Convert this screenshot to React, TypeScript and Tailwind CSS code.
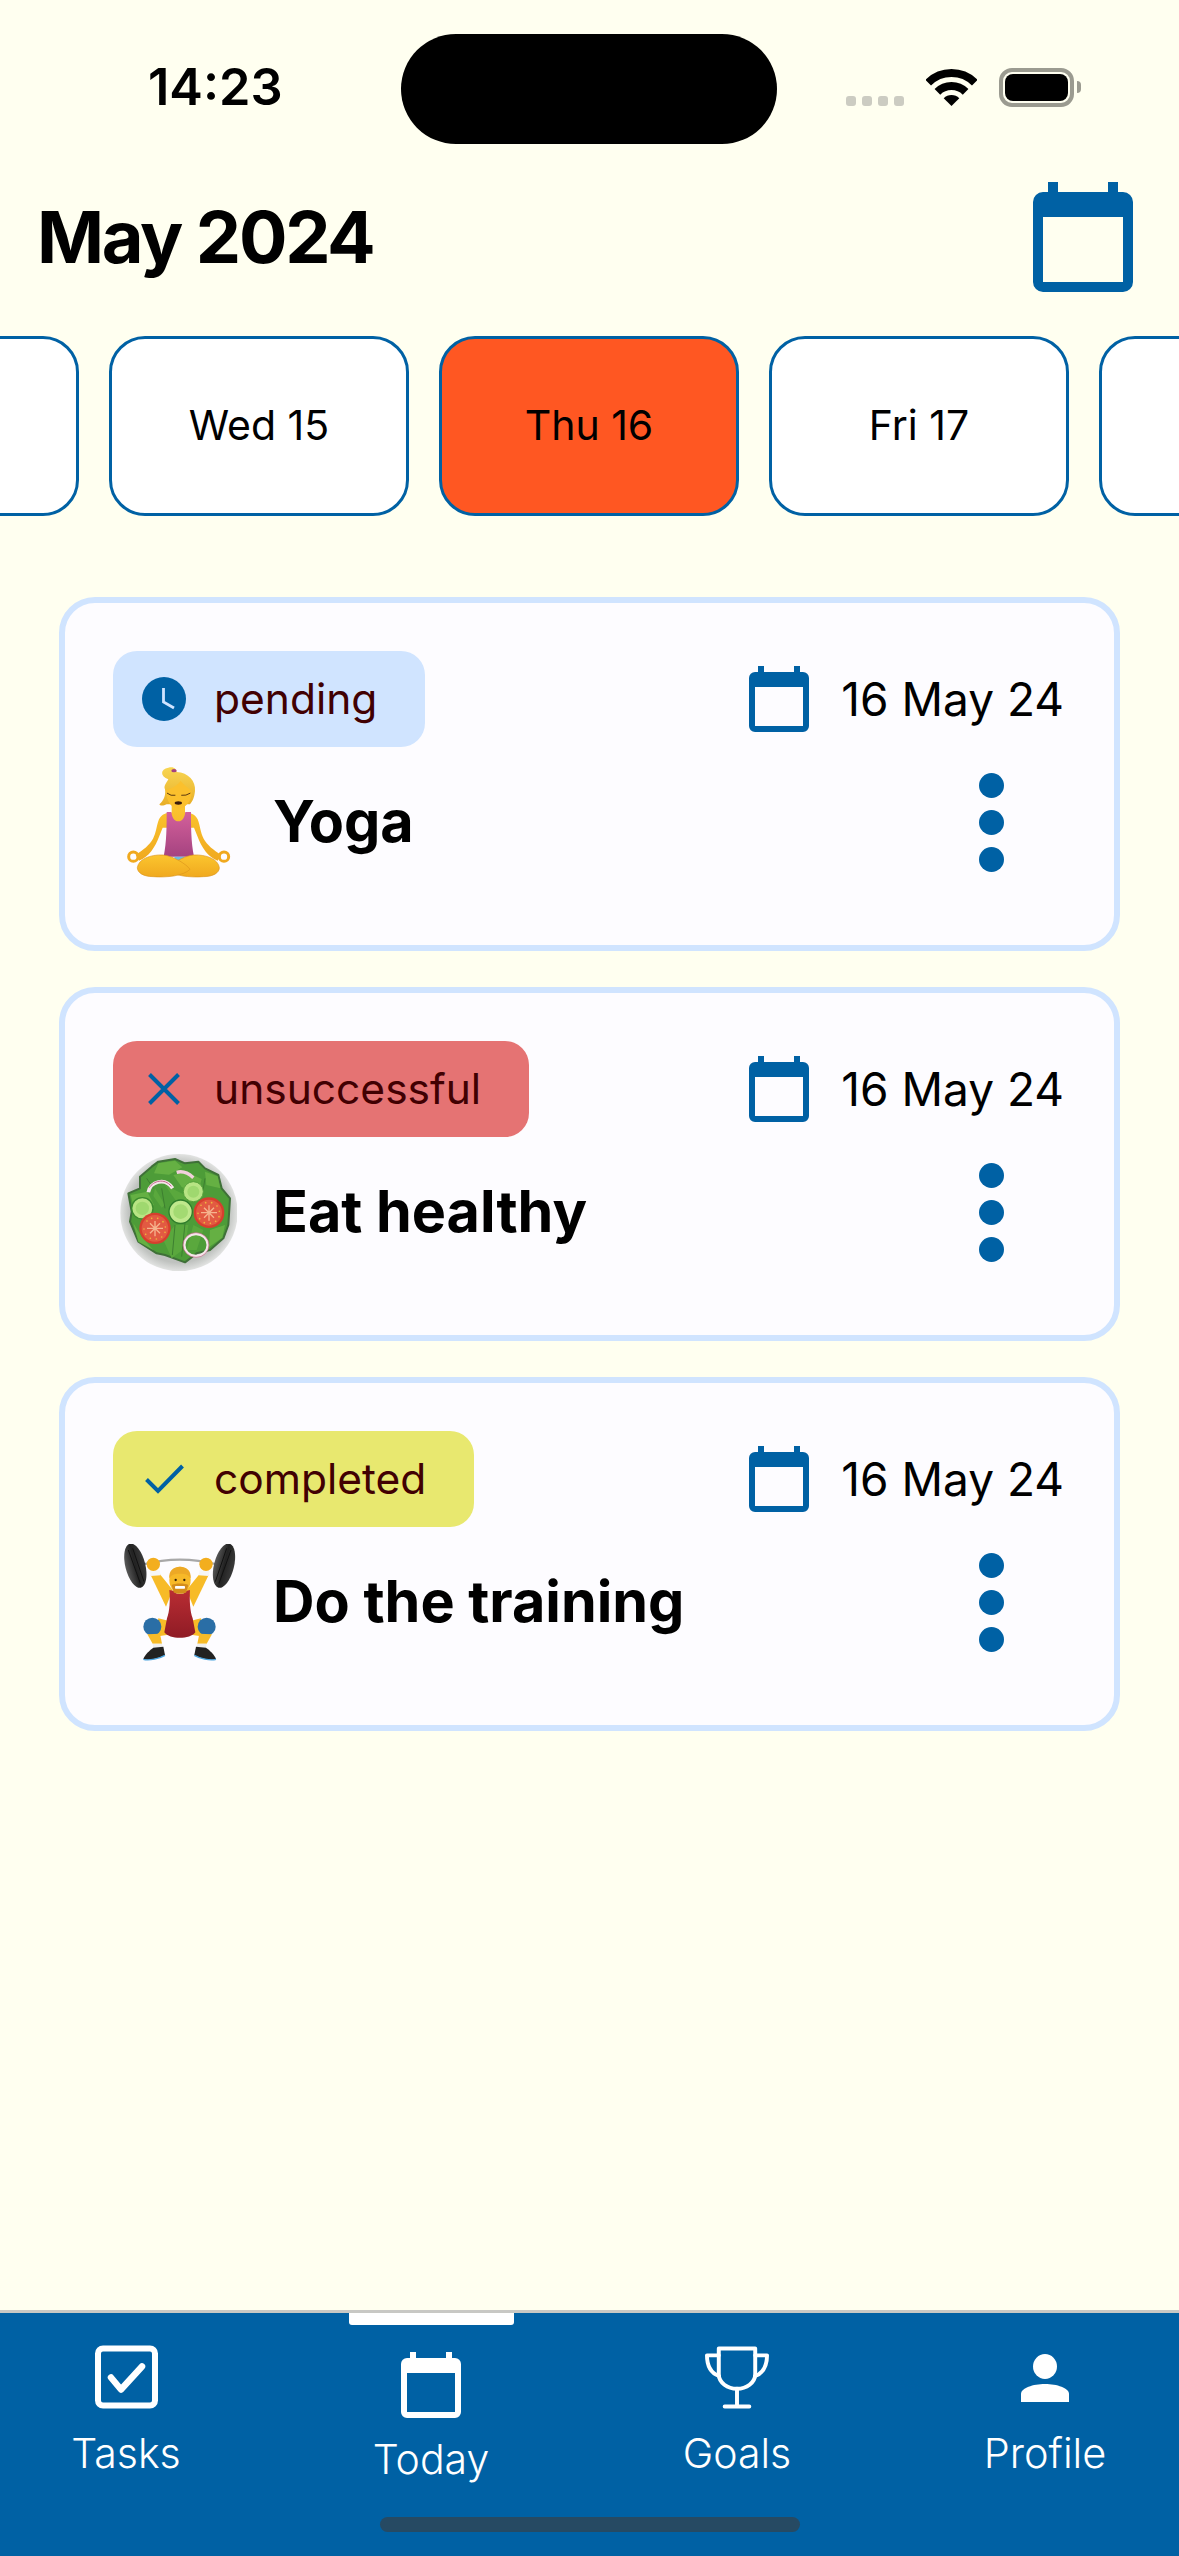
import React from 'react';

const DAYS = ['Tue 14', 'Wed 15', 'Thu 16', 'Fri 17', 'Sat 18'];
const TOMATO_SEEDS = [
  [-24, -22], [-10, -30], [8, -30], [24, -20], [31, -4], [30, 12], [20, 26], [4, 32], [-14, 30], [-28, 18], [-33, 2],
];

function CalendarIcon({ className }: { className: string }) {
  return (
    <svg viewBox="0 0 20 22" className={className} fill="currentColor">
      <path
        fillRule="evenodd"
        d="M2 2h1V0h2v2h10V0h2v2h1a2 2 0 0 1 2 2v16a2 2 0 0 1-2 2H2a2 2 0 0 1-2-2V4a2 2 0 0 1 2-2zm0 5v13h16V7H2z"
      />
    </svg>
  );
}

function ClockIcon() {
  return (
    <svg viewBox="0 0 44 44" className="w-[44px] h-[44px]">
      <circle cx="22" cy="22" r="22" fill="#0061a4" />
      <path d="M21.5 11v14l10.500 6" fill="none" stroke="#d0e4ff" strokeWidth="2.800" />
    </svg>
  );
}

function CrossIcon() {
  return (
    <svg viewBox="0 0 32 32" className="w-[32px] h-[32px]">
      <path d="M1.500 1.500l29 29M30.500 1.500l-29 29" fill="none" stroke="#0061a4" strokeWidth="4" />
    </svg>
  );
}

function CheckIcon() {
  return (
    <svg viewBox="0 0 39 30" className="w-[39px] h-[30px]">
      <path d="M1.500 15.500l11.500 11.500 24.500-25" fill="none" stroke="#0061a4" strokeWidth="4" />
    </svg>
  );
}

function YogaEmoji() {
  return (
    <svg viewBox="30 24 351 351" className="w-[117px] h-[117px]">
      <defs>
        <linearGradient id="yogaTop" x1="0" y1="0" x2="0" y2="1">
          <stop offset="0" stopColor="#d4609b" />
          <stop offset="1" stopColor="#a54380" />
        </linearGradient>
        <linearGradient id="yogaHair" x1="0" y1="0" x2="0" y2="1">
          <stop offset="0" stopColor="#f8d654" />
          <stop offset="1" stopColor="#e8ae27" />
        </linearGradient>
        <linearGradient id="yogaSkin" x1="0" y1="0" x2="0" y2="1">
          <stop offset="0" stopColor="#fbc52e" />
          <stop offset="1" stopColor="#f0a91f" />
        </linearGradient>
      </defs>
      <circle cx="70" cy="302" r="14" fill="none" stroke="#f0a91f" strokeWidth="9" />
      <circle cx="342" cy="302" r="14" fill="none" stroke="#f0a91f" strokeWidth="9" />
      <path
        d="M185 150H225V170C240 170 255 173 263 190C271 210 271 230 281 248C291 266 311 283 333 296L323 314C293 302 275 275 262 240L252 215H158L148 240C135 275 117 302 87 314L77 296C99 283 119 266 129 248C139 230 139 210 147 190C155 173 170 170 185 170Z"
        fill="url(#yogaSkin)"
      />
      <path d="M170 168h14c2 18 10 28 21 28s19-10 21-28h17c0 42 0 90 9 134h-91c9-44 9-92 9-134z" fill="url(#yogaTop)" />
      <path d="M192 302h32l-6 14h-20zM196 340h22l-10 10z" fill="#6bbce4" />
      <path d="M328 335c-3-25-38-40-78-38-30 3-70 28-80 43 20 20 70 25 110 22 30 0 48-12 48-27z" fill="url(#yogaSkin)" stroke="#dd961b" strokeWidth="2" />
      <path d="M82 335c3-25 38-40 78-38 30 3 70 28 80 43-20 20-70 25-110 22-30 0-48-12-48-27z" fill="url(#yogaSkin)" stroke="#dd961b" strokeWidth="2" />
      <path
        d="M175 70c-25-10-25-30 0-35 15-5 25 3 25 13 35 2 58 27 55 57-2 20-7 30-15 40h-70c-10 5-20 5-22 0 12-10 20-25 17-45-5-10 5-20 10-30z"
        fill="url(#yogaHair)"
      />
      <ellipse cx="192" cy="44" rx="8" ry="5" fill="#a54380" />
      <path d="M168 102c17-2 37-17 44-27 13 15 28 25 33 30 2 30-20 53-40 53s-37-23-37-56z" fill="#fbc02d" />
      <path d="M172 112q11 9 23 6M215 118q13 2 25-6" fill="none" stroke="#5c3a10" strokeWidth="3" strokeLinecap="round" />
      <ellipse cx="205" cy="141" rx="11" ry="5" fill="#3a1c0c" />
    </svg>
  );
}

function SaladEmoji() {
  return (
    <svg viewBox="30 27 351 351" className="w-[117px] h-[117px]">
      <defs>
        <radialGradient id="saladPlate" cx="0.5" cy="0.5" r="0.5">
          <stop offset="0.85" stopColor="#bfc2bf" />
          <stop offset="1" stopColor="#e2e3e2" />
        </radialGradient>
      </defs>
      <circle cx="207" cy="203" r="176" fill="url(#saladPlate)" />
      <path
        d="M55 145L90 130L90 95L125 65L145 50L195 42L225 55L265 50L285 70L325 90L335 130L360 160L355 240L340 280L300 315L260 325L225 352L165 330L140 325L85 290L60 230L65 200Z"
        fill="#4d9c38"
        stroke="#3f7038"
        strokeWidth="6"
        strokeLinejoin="round"
      />
      <path d="M145 55l50-8 22 20-40 22-45-4zM190 90l40-8 45 20-12 46-48-22zM285 80l38 14 8 36-42-10zM62 150l50-10 20 40-55 30zM300 255l45-15-8 38-40 28zM70 235l25 40 35 40-45-25z" fill="#65b043" />
      <path d="M135 130l30 50-10 8-25-35zM195 240l40 0-10 70-40 30-25-55zM165 120l60 30 15 40-40-20zM250 240l30 15-20 60-30 0z" fill="#5aa83d" />
      <path d="M195 240l-8 90M225 235l-10 100M155 130l10 60M285 100l-8 50M110 100l20 30" fill="none" stroke="#3d7f30" strokeWidth="3" />
      <path d="M115 142c5-32 50-47 73-12" fill="none" stroke="#f5e6ea" strokeWidth="11" />
      <path d="M118 128c12-20 45-30 66-4" fill="none" stroke="#c8648c" strokeWidth="3" />
      <path d="M200 82q25-7 50 16" fill="none" stroke="#f3d0dc" strokeWidth="10" />
      <circle cx="97" cy="190" r="32" fill="#b8e484" stroke="#3a8a2e" strokeWidth="4" />
      <circle cx="97" cy="190" r="20" fill="#9fd86f" />
      <circle cx="212" cy="200" r="35" fill="#bfe88c" stroke="#2f7d2b" strokeWidth="4" />
      <circle cx="212" cy="200" r="22" fill="#a3da72" />
      <circle cx="250" cy="140" r="30" fill="#b8e484" stroke="#55a03a" strokeWidth="3" />
      <circle cx="250" cy="140" r="18" fill="#9fd86f" />
      {[
        [135, 250, 47],
        [297, 203, 46],
      ].map(([cx, cy, r]) => (
        <g key={cx}>
          <circle cx={cx} cy={cy} r={r} fill="#d63f2e" />
          <circle cx={cx} cy={cy} r={r - 7} fill="#e25a42" />
          <path d={`M${cx} ${cy - 22}V${cy + 24}M${cx - 24} ${cy}H${cx + 24}M${cx - 15} ${cy - 15}L${cx + 15} ${cy + 15}M${cx + 15} ${cy - 15}L${cx - 15} ${cy + 15}`} stroke="#f6b48e" strokeWidth="4" />
          {TOMATO_SEEDS.map(([dx, dy]) => (
            <circle key={`${dx}${dy}`} cx={cx + dx} cy={cy + dy} r="2.500" fill="#eeb93e" />
          ))}
        </g>
      ))}
      <ellipse cx="258" cy="300" rx="35" ry="33" fill="none" stroke="#f5e6ea" strokeWidth="7" />
      <ellipse cx="258" cy="300" rx="39" ry="37" fill="none" stroke="#c8648c" strokeWidth="2" />
    </svg>
  );
}

function LifterEmoji() {
  return (
    <svg viewBox="30 27 351 351" className="w-[117px] h-[117px]">
      <defs>
        <linearGradient id="lifterPlate" x1="0" y1="0" x2="1" y2="0">
          <stop offset="0" stopColor="#5a5a5a" />
          <stop offset="0.5" stopColor="#222222" />
          <stop offset="1" stopColor="#3a3a3a" />
        </linearGradient>
        <linearGradient id="lifterRed" x1="0" y1="0" x2="0" y2="1">
          <stop offset="0" stopColor="#b92d33" />
          <stop offset="1" stopColor="#8f1b25" />
        </linearGradient>
      </defs>
      <path d="M100 88Q210 60 320 88" fill="none" stroke="#a8a8a8" strokeWidth="7" />
      <path d="M94 82l12 2-2 14-12-2zM326 82l-12 2 2 14 12-2z" fill="#1d5a9c" />
      <ellipse cx="76" cy="92" rx="30" ry="68" transform="rotate(-14 76 92)" fill="url(#lifterPlate)" />
      <path d="M55 45l36 100M68 40l34 100" stroke="#111111" strokeWidth="3" fill="none" />
      <ellipse cx="342" cy="92" rx="30" ry="68" transform="rotate(14 342 92)" fill="url(#lifterPlate)" />
      <path d="M363 45l-36 100M350 40l-34 100" stroke="#111111" strokeWidth="3" fill="none" />
      <path d="M122 120L150 118L188 165L168 215Z" fill="#f7bb28" />
      <path d="M296 120L268 118L230 165L250 215Z" fill="#f7bb28" />
      <path d="M119 108l30-2 3 15-30 2zM299 108l-30-2-3 15 30 2z" fill="#f6f6f6" />
      <circle cx="130" cy="88" r="20" fill="#f3ae1e" />
      <circle cx="288" cy="88" r="20" fill="#f3ae1e" />
      <path d="M145 250L178 258L170 300L135 305Z" fill="#f7bb28" />
      <path d="M273 250L240 258L248 300L283 305Z" fill="#f7bb28" />
      <path d="M178 165l14 3c3 12 33 12 36 0l12-3c-2 30 0 65 8 85l8 42c-15 22-78 22-93 0l8-42c8-20 10-55 7-85z" fill="url(#lifterRed)" />
      <circle cx="127" cy="275" r="27" fill="#2a6ea6" />
      <circle cx="290" cy="275" r="27" fill="#2a6ea6" />
      <path d="M112 298L150 296L156 326L128 326Z" fill="#f7bb28" />
      <path d="M306 298L268 296L262 326L290 326Z" fill="#f7bb28" />
      <path d="M128 326H156L158 340H130Z" fill="#efefef" />
      <path d="M290 326H262L260 340H288Z" fill="#efefef" />
      <path d="M130 338L160 335L165 360C150 370 115 378 100 372C105 358 120 345 130 338Z" fill="#222222" />
      <path d="M288 338L258 335L253 360C268 370 303 378 318 372C313 358 298 345 288 338Z" fill="#222222" />
      <path d="M100 373C118 378 150 370 165 361M318 373C300 378 268 370 253 361" fill="none" stroke="#4aa3de" strokeWidth="4" />
      <ellipse cx="210" cy="135" rx="32" ry="40" fill="#f7b928" />
      <path d="M178 130c-2-25 14-35 32-35s34 10 32 35c-6-10-14-14-32-14s-26 4-32 14z" fill="#eda926" />
      <path d="M185 150c10-6 40-6 50 0l-6 22c-10 6-28 6-38 0z" fill="#d48d1b" />
      <rect x="195" y="153" width="30" height="8" rx="2" fill="#ffffff" />
      <circle cx="197" cy="135" r="3.500" fill="#33210a" />
      <circle cx="223" cy="135" r="3.500" fill="#33210a" />
    </svg>
  );
}

function TaskCard({ badge, badgeBg, icon, emoji, title }: { badge: string; badgeBg: string; icon: React.ReactNode; emoji: React.ReactNode; title: string }) {
  return (
    <div className="h-[354px] rounded-[36px] border-[6px] border-[#d0e4ff] bg-[#fdfcff] pt-[48px] pl-[48px] pr-[50px]">
      <div className="flex items-center justify-between h-[96px]">
        <div className={`flex items-center h-[96px] rounded-[24px] pl-[21px] pr-[48px] ${badgeBg}`}>
          <div className="flex items-center justify-center w-[60px] mr-[20px]">{icon}</div>
          <span className="text-[42.500px] leading-none text-[#410002]">{badge}</span>
        </div>
        <div className="flex items-center gap-[32px]">
          <CalendarIcon className="w-[60px] h-[66px] text-[#0061a4]" />
          <span className="text-[46px] leading-none text-black">16 May 24</span>
        </div>
      </div>
      <div className="flex items-center mt-[15px] h-[120px] pl-[7px] pr-[60px]">
        {emoji}
        <span className="ml-[36px] text-[57.500px] font-bold leading-none text-black">{title}</span>
        <div className="ml-auto flex flex-col gap-[12px]">
          <div className="w-[25px] h-[25px] rounded-full bg-[#0061a4]" />
          <div className="w-[25px] h-[25px] rounded-full bg-[#0061a4]" />
          <div className="w-[25px] h-[25px] rounded-full bg-[#0061a4]" />
        </div>
      </div>
    </div>
  );
}

export default function App() {
  return (
    <div className="relative flex flex-col h-[2556px] w-[1179px] overflow-hidden bg-[#fffff0] font-[Inter,sans-serif]">
      {/* status bar */}
      <div className="relative flex items-center h-[172px] shrink-0">
        <span className="ml-[148px] mb-[-2px] text-[50.500px] font-semibold leading-none text-black">14:23</span>
        <div className="absolute left-[401px] top-[34px] w-[376px] h-[110px] rounded-[55px] bg-black" />
        <div className="absolute right-[98px] top-[68px] flex items-start">
          <div className="flex gap-[6px] mt-[28px] mr-[22px]">
            <div className="w-[10px] h-[10px] rounded-[3px] bg-[#ccccc2]" />
            <div className="w-[10px] h-[10px] rounded-[3px] bg-[#ccccc2]" />
            <div className="w-[10px] h-[10px] rounded-[3px] bg-[#ccccc2]" />
            <div className="w-[10px] h-[10px] rounded-[3px] bg-[#ccccc2]" />
          </div>
          <svg viewBox="0 0 51 37" className="w-[51px] h-[37px] mt-[1px] mr-[22px]">
            <path d="M2.200 13.700A33 33 0 0 1 48.800 13.700M11.400 22.900A20 20 0 0 1 39.600 22.900" fill="none" stroke="#000" strokeWidth="8" />
            <path d="M25.500 37L17.700 29.200A11 11 0 0 1 33.300 29.200Z" fill="#000" />
          </svg>
          <div className="flex items-center justify-center w-[75px] h-[39px] rounded-[13px] border-[4px] border-[#9b9b90]">
            <div className="w-[63px] h-[27px] rounded-[8px] bg-black" />
          </div>
          <div className="w-[4px] h-[12px] mt-[13px] ml-[3px] rounded-r-[4px] bg-[#9b9b90]" />
        </div>
      </div>

      {/* month header */}
      <div className="flex items-center justify-between h-[130px] shrink-0 pl-[37px] pr-[46px]">
        <h1 className="text-[72px] font-bold leading-none tracking-[-2.300px] text-black">May 2024</h1>
        <CalendarIcon className="w-[100px] h-[110px] text-[#0061a4]" />
      </div>

      {/* day strip */}
      <div className="flex gap-[30px] mt-[34px] -ml-[221px] shrink-0">
        {DAYS.map((day) => (
          <div
            key={day}
            className={`flex items-center justify-center w-[300px] h-[180px] shrink-0 rounded-[36px] border-[3px] border-[#0061a4] text-[41px] text-black ${
              day === 'Thu 16' ? 'bg-[#ff5722]' : 'bg-white'
            }`}
          >
            {day}
          </div>
        ))}
      </div>

      {/* tasks */}
      <div className="flex flex-col gap-[36px] mt-[81px] px-[59px]">
        <TaskCard badge="pending" badgeBg="bg-[#d0e4ff]" icon={<ClockIcon />} emoji={<YogaEmoji />} title="Yoga" />
        <TaskCard badge="unsuccessful" badgeBg="bg-[#e57373]" icon={<CrossIcon />} emoji={<SaladEmoji />} title="Eat healthy" />
        <TaskCard badge="completed" badgeBg="bg-[#e8e86f]" icon={<CheckIcon />} emoji={<LifterEmoji />} title="Do the training" />
      </div>

      {/* bottom nav */}
      <div className="relative flex mt-auto h-[246px] shrink-0 border-t-[3px] border-[#c8c8c4] bg-[#0061a4] pl-[26px]">
        <div className="absolute left-[349px] top-0 w-[165px] h-[12px] rounded-b-[3px] bg-white" />
        <div className="flex flex-col items-center w-[200px] mr-[105px] pt-[32px] text-white">
          <svg viewBox="0 0 63 63" className="w-[63px] h-[64px]">
            <rect x="3" y="3" width="57" height="57" rx="5" fill="none" stroke="#fff" strokeWidth="6" />
            <path d="M16 32l10 12 21-23" fill="none" stroke="#fff" strokeWidth="6.500" strokeLinecap="round" strokeLinejoin="round" />
          </svg>
          <span className="mt-[14px] text-[41px] font-light leading-[60px]">Tasks</span>
        </div>
        <div className="flex flex-col items-center w-[200px] mr-[106px] pt-[39px] text-white">
          <CalendarIcon className="w-[60px] h-[66px] text-white" />
          <span className="mt-[11px] text-[41px] font-light leading-[60px]">Today</span>
        </div>
        <div className="flex flex-col items-center w-[200px] mr-[108px] pt-[33px] text-white">
          <svg viewBox="0 0 65 64" className="w-[64px] h-[64px]" fill="none" stroke="#fff" strokeWidth="4" strokeLinecap="round" strokeLinejoin="round">
            <path d="M14 2h37v26c0 9-9 15-18.500 15S14 37 14 28V2z" />
            <path d="M14 9H2c0 10 4 18 12 21M51 9h12c0 10-4 18-12 21" />
            <path d="M32.500 43v18M20 61h25" />
          </svg>
          <span className="mt-[13px] text-[41px] font-light leading-[60px]">Goals</span>
        </div>
        <div className="flex flex-col items-center w-[200px] pt-[41px] text-white">
          <svg viewBox="0 0 48 48" className="w-[48px] h-[48px]" fill="#fff">
            <ellipse cx="24" cy="12.500" rx="12" ry="12.500" />
            <path d="M0 48v-8c0-6 12-10 24-10s24 4 24 10v8H0z" />
          </svg>
          <span className="mt-[21px] text-[41.500px] font-light leading-[60px]">Profile</span>
        </div>
        <div className="absolute left-[380px] top-[204px] w-[420px] h-[15px] rounded-full bg-[#264a63]" />
      </div>
    </div>
  );
}
